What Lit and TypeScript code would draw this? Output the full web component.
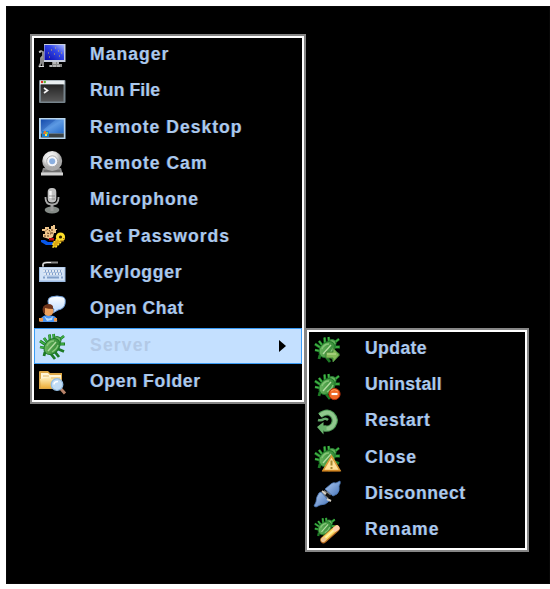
import { LitElement, html, css, svg } from "lit";
import { customElement, property } from "lit/decorators.js";
import { classMap } from "lit/directives/class-map.js";
import { styleMap } from "lit/directives/style-map.js";

const bugLegs = svg`
  <path d="M8 9L5 5M11 7L10.5 1.5M15 5L14.5 1M20 7L25 3M21 11H26M19 16L25 18.5M16 19L20 24M12 21L16 26M6 19L5 23M6 15L1 14M7 12L1 8"
    fill="none" stroke="#1d7a25" stroke-width="2.8"/>
  <path d="M8 9L5 5M11 7L10.5 1.5M15 5L14.5 1M20 7L25 3M21 11H25M6 15L1 14M7 12L1 8" fill="none" stroke="#43b548" stroke-width="1.4"/>`;
const bug = svg`${bugLegs}
  <circle cx="18" cy="7.5" r="4" fill="#69b45f" stroke="#258032"/>
  <ellipse cx="13" cy="13.5" rx="9" ry="6.8" transform="rotate(-44 13 13.5)" fill="url(#bugfill)" stroke="#1e7a28"/>
  <path d="M9 18L17 9" fill="none" stroke="#b2dca0" stroke-width="1.4"/>
  <path d="M8 13Q10 8 15 8M13 19Q18 16 19 12" fill="none" stroke="#85c678" stroke-width="1.4"/>`;
const bugDefs = svg`<defs><linearGradient id="bugfill" x1="0" y1="0" x2="1" y2="1">
  <stop offset="0" stop-color="#7ac26c"/><stop offset=".5" stop-color="#4b9d47"/><stop offset="1" stop-color="#2b8232"/>
</linearGradient></defs>`;

const icons = {
  manager: svg`<defs><linearGradient id="mon" x1="1" y1="0" x2="0" y2="1"><stop offset="0" stop-color="#a9b9ff"/><stop offset=".4" stop-color="#3448e8"/><stop offset="1" stop-color="#0808a8"/></linearGradient></defs>
    <rect x="5" y="2" width="21.5" height="18" fill="#c8cede"/>
    <rect x="5.5" y="3" width="19.5" height="15" fill="url(#mon)"/>
    <path d="M9 11h1M12 8h1M15 12h1M19 9h1M20 14h1M10 15h1M16 6h1M22 11h1" stroke="#d2b35c" stroke-width="1"/>
    <path d="M13 20h7v2h3v3H11v-2h2z" fill="#858585"/><path d="M10 24h12M14 21h6" stroke="#e5e5e5" stroke-dasharray="3 1"/>
    <path d="M0 10l2-1 2 1v4l-2 2v5l-2 4M4 13v11" fill="none" stroke="#999" stroke-width="1.8"/><path d="M0 24.5h5M0 10h2" stroke="#ddd"/>`,
  run: svg`<defs><linearGradient id="term" x2="0" y2="1"><stop stop-color="#242424"/><stop offset="1" stop-color="#575757"/></linearGradient></defs>
    <rect x="0" y="1" width="26.5" height="23" rx="1" fill="#77848c"/><path d="M1 1.5h24.5v4H1z" fill="#e9eef0"/>
    <rect x="2" y="5.5" width="22.5" height="17" fill="url(#term)"/>
    <circle cx="3" cy="3" r="1.2" fill="#e03020"/><circle cx="5.8" cy="3" r="1.2" fill="#5fb22e"/>
    <path d="M5 9l3.5 2.5L5 14" fill="none" stroke="#f2f2f2" stroke-width="1.7"/>`,
  desktop: svg`<defs><linearGradient id="desk" x2="1" y2="1"><stop stop-color="#1854b5"/><stop offset=".5" stop-color="#5d9ae3"/><stop offset="1" stop-color="#2469c8"/></linearGradient></defs>
    <rect x="0" y="3" width="26.5" height="21" fill="#b9d6ed"/><rect x="1.8" y="4.5" width="23" height="14" fill="url(#desk)"/>
    <path d="M2 4.5h15Q7 12 2 17z" fill="#0d3c9b" opacity=".3"/><rect x="1.8" y="18.5" width="23" height="4" fill="#3b4245"/>
    <rect x="3" y="16" width="7" height="6" fill="#1684d2"/><path d="M5 16h2v3H4z" fill="#e37732"/><path d="M7 17h2v2H7z" fill="#8fc33e"/><path d="M6 19h2v2H6z" fill="#ffe34e"/>`,
  cam: svg`<defs><radialGradient id="camball" cx=".4" cy=".3"><stop stop-color="#fff"/><stop offset=".65" stop-color="#dedede"/><stop offset="1" stop-color="#a8a8a8"/></radialGradient></defs>
    <path d="M4 17h18l2 7H2z" fill="#888"/><path d="M2 21.5h22v3H2z" fill="#d3d3d3"/><path d="M5 20h16" stroke="#555"/>
    <circle cx="13.2" cy="10" r="10" fill="url(#camball)"/><circle cx="13.2" cy="10.3" r="5.5" fill="#f4f6fa" stroke="#aaa"/><circle cx="13.2" cy="10.3" r="3" fill="#8aafe0"/>`,
  mic: svg`<ellipse cx="13" cy="22" rx="7.3" ry="3.4" fill="#858b87"/><path d="M13 16v7" stroke="#9b9b9b" stroke-width="3"/>
    <path d="M6.5 9v1q0 6.5 6.5 6.5t6.5-6.5V9" fill="none" stroke="#aaa" stroke-width="1.8"/>
    <rect x="8.7" y="0" width="8.6" height="14.5" rx="4" fill="#c3c3c3"/><path d="M11.5 3v9" stroke="#f7f7f7" stroke-width="2.4"/><path d="M10 8h6M10 11h6" stroke="#777" stroke-width=".7"/>`,
  password: svg`<path d="M3 5h3V3h4v2h2V2h3v4h2v3h-2l-1 4-4 2-6-2v-3h2V7H3zM14 1h2v4h2v1h-4z" fill="#efc68c"/><path d="M5 8l4-3M10 6l2 3M5 12h6M8 9l4 1M13 5v6" stroke="#5c3a1c" stroke-dasharray="2 1"/>
    <path d="M2 16h4l3 2h5v3H7l-5-3z" fill="#0756e8"/><path d="M10 14h5v2.5h-5z" fill="#bd0b0b"/>
    <circle cx="21.5" cy="13" r="4.6" fill="#ffe02b"/><path d="M18 15l-4 4v4h3l5-5" fill="#d9a712" stroke="#ffe02b" stroke-width="1.4" stroke-dasharray="2 1"/><circle cx="21.5" cy="13" r="1.6" fill="#332600"/><path d="M24 14l2 2M21 17h4" stroke="#a46d13"/>`,
  keyboard: svg`<path d="M4 7V4.500q0-2 4-2h11" fill="none" stroke="#888" stroke-width="2"/><path d="M4 6V4.500q0-2 4-2h4" fill="none" stroke="#eee"/>
    <rect x="0" y="7" width="26.500" height="15" fill="#9dbbe2"/><rect x="1" y="7.500" width="24.500" height="13" fill="#d3e3f7"/>
    <path d="M4 11h19M5 14h18" stroke="#83a0cb" stroke-width="2.400"/><path d="M4 11h19M5 14h18" stroke="#fff" stroke-width="1.700" stroke-dasharray="2 1"/><path d="M4 17.500h2M8 17.500h12M22 17.500h2" stroke="#82a0ca" stroke-width="1.800"/>`,
  chat: svg`<defs><linearGradient id="bubble" x2="0" y2="1"><stop stop-color="#fff"/><stop offset="1" stop-color="#b9d9ff"/></linearGradient></defs>
    <path d="M12 1Q18-1 24 1q3 1 2 7-1 5-7 6l-5 3 1-4-4-2Q9 9 9 5q0-3 3-4z" fill="url(#bubble)" stroke="#6f9dd7"/>
    <path d="M1 26q0-6 7-7l7 1q4 2 3 6z" fill="#4b94f0"/><path d="M5 20q5 5 9 0l-1 4-5 1z" fill="#b5dcff"/>
    <path d="M0 22h4v3.500H0zM15 22h3v3.500h-3z" fill="#ec984c"/><circle cx="9.500" cy="15" r="5" fill="#eba15e"/>
    <path d="M4 16q-2-7 5-8 6 0 5 5-5 0-8-1v6z" fill="#6e341b"/>`,
  server: svg`${bugDefs}${bug}`,
  folder: svg`<defs><linearGradient id="fold" x2="0" y2="1"><stop stop-color="#fff2c1"/><stop offset="1" stop-color="#ecae3a"/></linearGradient></defs>
    <path d="M0 3Q0 2 1 2h8l2 2h12v16H0z" fill="#dda848"/><path d="M2 4h7l2 2h11v4H2z" fill="#fff6d7"/><path d="M1 10l9-2h12v11H2z" fill="url(#fold)"/>
    <path d="M4 7h6M12 9h9" stroke="#e4b967"/><path d="M22 20l4 4.500" stroke="#b9846a" stroke-width="3"/><circle cx="18" cy="15.500" r="5.800" fill="#c2ddf5" stroke="#94bde2" stroke-width="1.300"/><path d="M15 15.500q0-3 4-3" stroke="#fff" fill="none" stroke-width="1.500"/>`,
  update: svg`${bugDefs}${bug}<path d="M12 16h7v-4l6.500 7L19 26v-4h-7z" fill="#83bc58" stroke="#46843a"/><path d="M13 18h9" stroke="#c0df98"/>`,
  uninstall: svg`${bugDefs}${bug}<circle cx="20.500" cy="21" r="5.600" fill="#ef6823" stroke="#b82d0b"/><path d="M17 18q3-3 7 0" stroke="#ff9b58" fill="none"/><path d="M17.500 21h6" stroke="#fff" stroke-width="2.200"/>`,
  restart: svg`<path d="M6 6.500Q13 1 18 5.500q5 5 1 11-3 4-9 3" fill="none" stroke="#4f9d57" stroke-width="6"/>
    <path d="M6 6.500Q13 1 18 5.500q5 5 1 11-3 4-9 3" fill="none" stroke="#91c88e" stroke-width="3.800"/>
    <path d="M3 18l6.500-5v3.500h3v5h-3v4z" fill="#69b36d"/><path d="M4 11q3 1 6-1 2-1 4 1" fill="none" stroke="#63a96a" stroke-width="2.500"/>`,
  close: svg`${bugDefs}${bug}<path d="M17.500 11L26 25.500H9z" fill="#ffe19a" stroke="#db9b38" stroke-width="1.500"/><path d="M17.500 15.500v5M17.500 22v2" stroke="#a88932" stroke-width="2"/><path d="M8 26h18.500" stroke="#c87512"/>`,
  disconnect: svg`<defs><linearGradient id="plug" x2="1" y2="1"><stop stop-color="#b3cdf2"/><stop offset="1" stop-color="#4573b8"/></linearGradient></defs>
    <path d="M9 11l6 5M11 16l7-7" stroke="#777" stroke-width="5"/><path d="M11 8l6-5q2-2 5-1l4-2q1 2-1 5 1 5-2 8l-4 2z" fill="url(#plug)" stroke="#4c78b6" stroke-width=".8"/>
    <path d="M5 12q-3 4-3 9l-2 4 2 1 4-2q6 0 9-4l-8-9z" fill="url(#plug)" stroke="#4c78b6" stroke-width=".8"/><path d="M8 10l5 4M13 18l4 2" stroke="#d6d1c7" stroke-width="2"/><path d="M12 13l4 3" stroke="#111" stroke-width="3"/>`,
  rename: svg`${bugDefs}<g transform="scale(.83)">${bug}</g><path d="M9.500 23L22.500 11.500" stroke="#b96c28" stroke-width="6.500" stroke-linecap="round"/><path d="M9.500 22.500L22.500 11" stroke="#f8d55d" stroke-width="5" stroke-linecap="round"/><path d="M11 21l9-8" stroke="#fff1a2" stroke-width="2"/><path d="M21.500 12l1.500-1" stroke="#ffd0ae" stroke-width="5" stroke-linecap="round"/><path d="M9 23l1-1" stroke="#f0c497" stroke-width="4" stroke-linecap="round"/>`,
};

interface Entry { icon: keyof typeof icons; label: string; tracking: number; selected?: boolean; }

@customElement("menu-row")
class MenuRow extends LitElement {
  @property({ attribute: false }) entry!: Entry;
  static styles = css`
    :host { display: block; flex: 1 1 0; min-height: 0; }
    .row { box-sizing: border-box; height: 100%; display: flex; align-items: center; padding-left: 4.5px; border: 0 solid #3b9cf5; }
    .icon { width: 26.5px; height: 26.5px; flex: none; overflow: visible; }
    .label { flex: 1; padding: 0 0 3px 25px; font: bold 17.6px/20px "Liberation Sans", Arial, sans-serif;
      color: #abc8eb; text-shadow: -.6px 0 0 rgba(35,95,190,.55), .6px 0 0 rgba(145,85,30,.5); white-space: nowrap; }
    .selected { background: #c4e0ff; border-width: 1.5px; padding-left: 3.5px; }
    .selected .label { color: #b2c9e6; text-shadow: none; }
    .arrow { width: 7px; height: 12px; margin-right: 15px; }
  `;
  render() {
    return html`<div class=${classMap({ row: true, selected: !!this.entry.selected })}>
      <svg class="icon" viewBox="0 0 26.5 26.5">${icons[this.entry.icon]}</svg>
      <span class="label" style=${styleMap({ letterSpacing: `${this.entry.tracking}px` })}>${this.entry.label}</span>
      ${this.entry.selected ? html`<svg class="arrow" viewBox="0 0 7 12"><path d="M0 0L7 6L0 12Z" fill="#000"/></svg>` : null}
    </div>`;
  }
}

@customElement("app-root")
class AppRoot extends LitElement {
  static styles = css`
    :host { display: block; width: 550px; height: 589px; background: #fff; overflow: hidden; }
    .desktop { position: relative; box-sizing: border-box; margin: 0 0 0 6px; height: 578px; background: #000; border: 1px solid #070707; }
    .space { height: 6px; }
    .menu { position: absolute; box-sizing: border-box; display: flex; flex-direction: column; background: #000; border: 2px solid #858585; box-shadow: inset 0 0 0 2px #fff; padding: 1.5px 2px; }
    .main { left: 23px; top: 27px; width: 276px; height: 370px; }
    .sub { left: 298px; top: 321px; width: 224px; height: 224px; }
  `;
  main: Entry[] = [
    { icon: "manager", label: "Manager", tracking: 1.02 }, { icon: "run", label: "Run File", tracking: 0.1 },
    { icon: "desktop", label: "Remote Desktop", tracking: 0.97 }, { icon: "cam", label: "Remote Cam", tracking: 1 },
    { icon: "mic", label: "Microphone", tracking: 0.93 }, { icon: "password", label: "Get Passwords", tracking: 1 },
    { icon: "keyboard", label: "Keylogger", tracking: 0.68 }, { icon: "chat", label: "Open Chat", tracking: 0.55 },
    { icon: "server", label: "Server", tracking: 1.15, selected: true }, { icon: "folder", label: "Open Folder", tracking: 0.65 },
  ];
  sub: Entry[] = [
    { icon: "update", label: "Update", tracking: 0.4 }, { icon: "uninstall", label: "Uninstall", tracking: 0.3 },
    { icon: "restart", label: "Restart", tracking: 0.7 }, { icon: "close", label: "Close", tracking: 0.8 },
    { icon: "disconnect", label: "Disconnect", tracking: 0.6 }, { icon: "rename", label: "Rename", tracking: 1 },
  ];
  render() {
    return html`<div class="space"></div><div class="desktop">
      <div class="menu main">${this.main.map(e => html`<menu-row .entry=${e}></menu-row>`)}</div>
      <div class="menu sub">${this.sub.map(e => html`<menu-row .entry=${e}></menu-row>`)}</div>
    </div>`;
  }
}
